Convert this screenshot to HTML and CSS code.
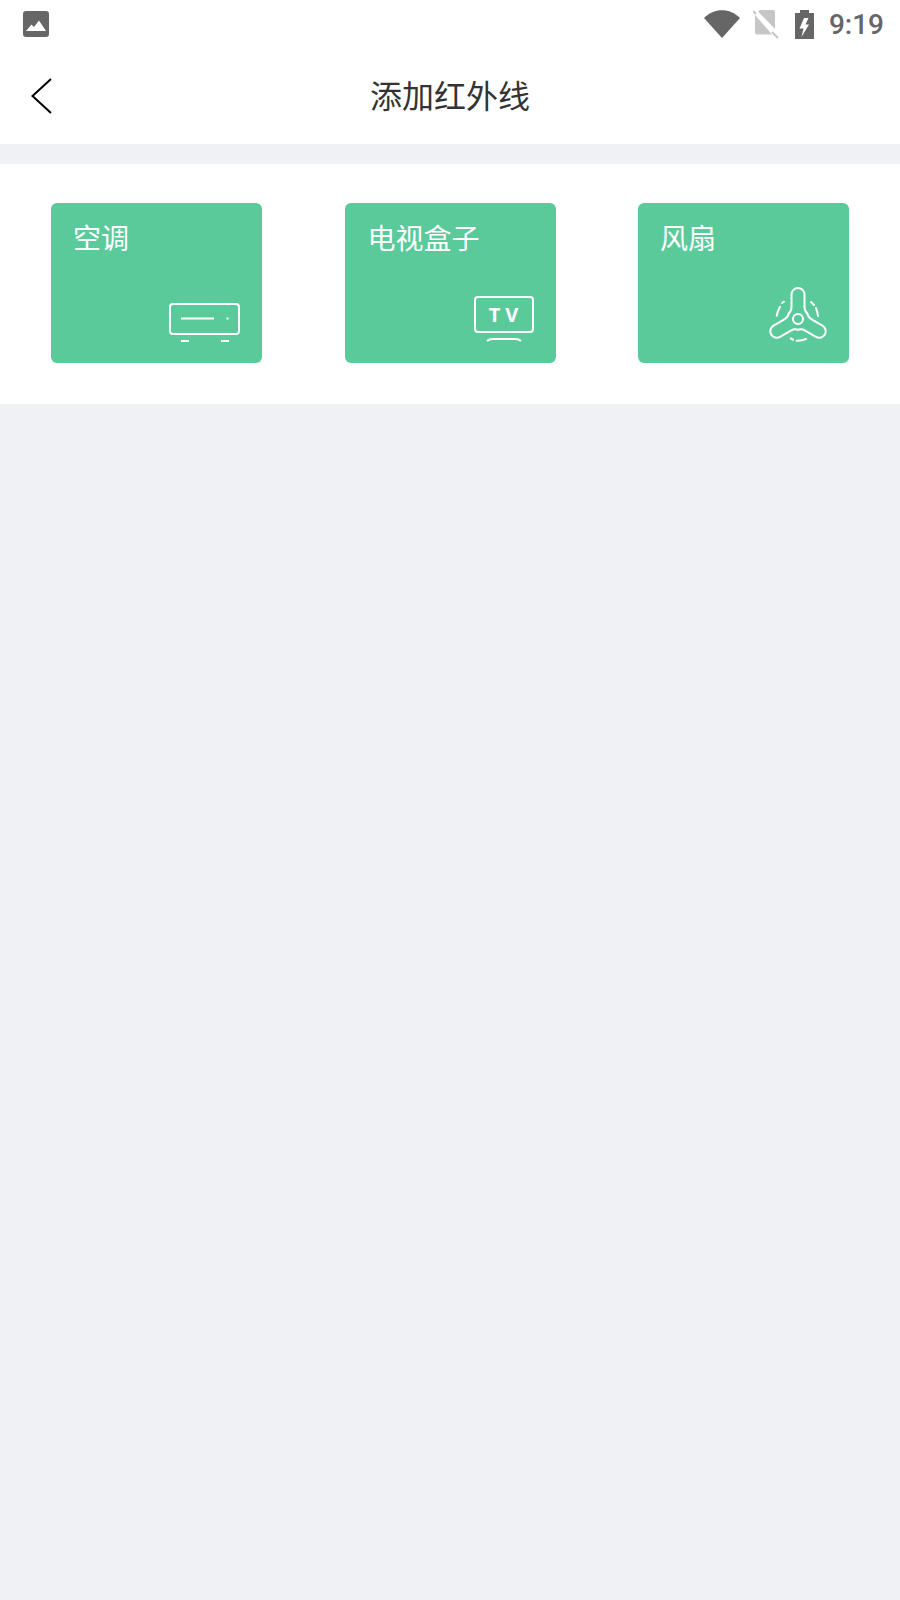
FILE: index.html
```html
<!DOCTYPE html>
<html lang="zh-CN">
<head>
    <meta charset="UTF-8">
    <meta name="viewport" content="width=device-width, initial-scale=1.0">
    <title>添加红外线</title>
    <link rel="stylesheet" href="styles.css">
</head>
<body>
    <div class="status-bar">
        <svg class="status-photo" width="26" height="26" viewBox="0 0 26 26">
            <rect width="26" height="26" rx="3" fill="#666"/>
            <path d="M3 20 L8.500 13.500 L11 16 L16 9.500 L23 20 Z" fill="#fff"/>
        </svg>
        <div class="status-right">
            <svg class="status-wifi" width="36" height="28" viewBox="0 0 36 28">
                <path d="M0 8 C10 -2.500 26 -2.500 36 8 L18 28 Z" fill="#666"/>
            </svg>
            <svg class="status-sim" width="26" height="30" viewBox="0 0 26 30">
                <path d="M7 1 H20 Q22 1 22 3 V20 L5 2.500 Z M2 6 L19 25.500 H4 Q2 25.500 2 23.500 Z" fill="#c6c6c6"/>
                <path d="M0 2 L3 5 M19 23 L25 29" stroke="#c6c6c6" stroke-width="2"/>
            </svg>
            <svg class="status-battery" width="19" height="29" viewBox="0 0 19 29">
                <path d="M5 0 H14 V3 H19 V29 H0 V3 H5 Z" fill="#666"/>
                <path d="M9 8 H13.500 L10.500 14.500 H14 L6.500 27 L8.500 18.500 H4.500 Z" fill="#fff"/>
            </svg>
            <span class="status-time">9:19</span>
        </div>
    </div>

    <div class="header">
        <div class="back">
            <svg width="24" height="38" viewBox="0 0 24 38">
                <path d="M21 2 L2.500 19 L21 36" fill="none" stroke="#000" stroke-width="2"/>
            </svg>
        </div>
        <div class="title">添加红外线</div>
    </div>

    <div class="device-list">
        <div class="device">
            <div class="device-name">空调</div>
            <svg class="device-icon" width="100" height="89" viewBox="0 0 100 89" fill="none" stroke="#fff" stroke-width="2">
                <rect x="8" y="30" width="69" height="30" rx="3"/>
                <path d="M19 44.500 H52 M64.500 44.500 H66.500 M19 67 H27 M59 67 H67"/>
            </svg>
        </div>
        <div class="device">
            <div class="device-name">电视盒子</div>
            <svg class="device-icon" width="100" height="89" viewBox="0 0 100 89" fill="none" stroke="#fff" stroke-width="2">
                <rect x="19" y="23" width="58" height="35" rx="3"/>
                <path d="M31 67 Q33 65 37 65 H59 Q63 65 65 67"/>
                <text class="tv-mark" x="50" y="48" text-anchor="middle">TV</text>
            </svg>
        </div>
        <div class="device">
            <div class="device-name">风扇</div>
            <svg class="device-icon" width="100" height="89" viewBox="0 0 100 89" fill="none" stroke="#fff" stroke-width="2" stroke-linecap="round">
                <!-- one blade, turned three times round the hub -->
                <path d="M39.700 39.600 Q42.500 37 42.500 33 V20.500 A6.500 6.500 0 0 1 55.500 20.500 V33 Q55.500 37 58.300 39.600"/>
                <path d="M39.700 39.600 Q42.500 37 42.500 33 V20.500 A6.500 6.500 0 0 1 55.500 20.500 V33 Q55.500 37 58.300 39.600" transform="rotate(120 49 45)"/>
                <path d="M39.700 39.600 Q42.500 37 42.500 33 V20.500 A6.500 6.500 0 0 1 55.500 20.500 V33 Q55.500 37 58.300 39.600" transform="rotate(240 49 45)"/>
                <circle cx="49" cy="45" r="5"/>
                <path d="M27.700 41.700 Q28.500 37 31 32.700 M33 29 L35 27.700 M62 28 L65 31 M67 34 Q68.500 38 69 42 M41.700 64.300 L44 65.700 M47.700 66.700 Q52.500 67 57 65"/>
            </svg>
        </div>
    </div>
</body>
</html>
```

FILE: styles.css
```css
body{
    margin: 0;
    height: 1600px;
    background: #f0f1f5;
    font-family: "Noto Sans CJK SC", "Noto Sans", sans-serif;
}

.status-bar{
    display: flex;
    justify-content: space-between;
    align-items: center;
    height: 48px;
    padding: 0 16px 2px 23px;
    background: #fff;
}

.status-right{
    display: flex;
    align-items: center;
}

.status-wifi{
    margin-right: 13px;
}

.status-sim{
    margin-right: 16px;
}

.status-time{
    margin-left: 15px;
    font-family: Roboto, sans-serif;
    font-size: 28px;
    font-weight: 500;
    color: #666;
}

.header{
    position: relative;
    display: flex;
    align-items: center;
    justify-content: center;
    height: 88px;
    padding-bottom: 6px;
    background: #fff;
}

/* back arrow lies over the centred title row */
.back{
    position: absolute;
    left: 30px;
    top: 27px;
    height: 38px;
}

.title{
    font-size: 32px;
    color: #333;
}

.device-list{
    display: flex;
    justify-content: space-between;
    margin-top: 20px;
    padding: 39px 51px 41px;
    background: #fff;
}

.device{
    display: flex;
    flex-direction: column;
    width: 211px;
    height: 160px;
    border-radius: 6px;
    background: #5bca9a;
}

.device-name{
    padding: 14px 0 0 22px;
    font-size: 28px;
    line-height: 40px;
    color: #fff;
}

.device:nth-child(2) .device-name{
    padding-left: 23px;
}

.device-icon{
    align-self: flex-end;
    margin-top: auto;
}

.tv-mark{
    font-family: "Open Sans", sans-serif;
    font-size: 20px;
    font-weight: 700;
    letter-spacing: 5px;
    fill: #fff;
    stroke: none;
}
```
